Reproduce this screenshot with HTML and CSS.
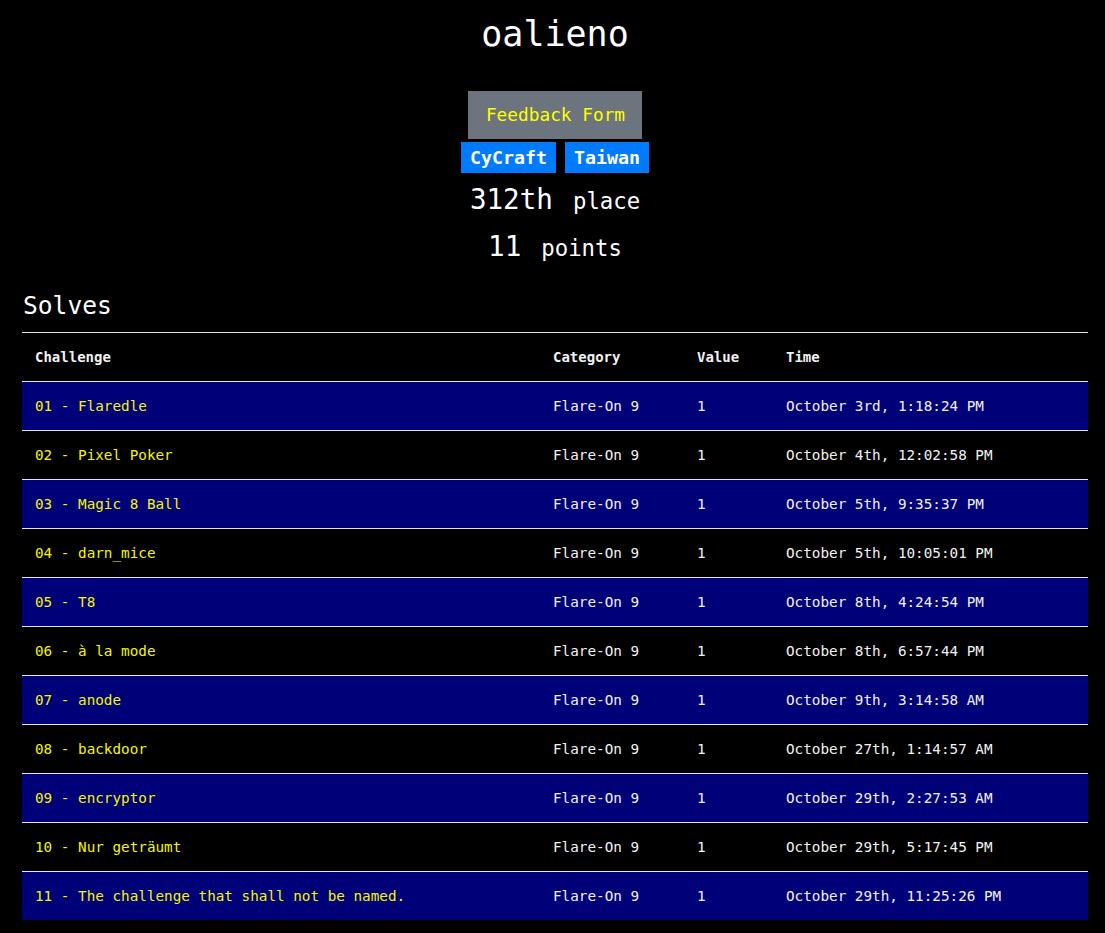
FILE: index.html
```html
<!DOCTYPE html>
<html>
<head>
<meta charset="utf-8">
<link rel="stylesheet" href="styles.css">
</head>
<body>
<div class="page">
  <header class="profile">
    <h1 class="name">oalieno</h1>
    <a class="feedback">Feedback Form</a>
    <div class="badges">
      <span class="badge">CyCraft</span>
      <span class="badge">Taiwan</span>
    </div>
    <div class="stat"><span class="big">312th</span><span class="small">place</span></div>
    <div class="stat stat-points"><span class="big">11</span><span class="small">points</span></div>
  </header>
  <h2 class="section-title">Solves</h2>
  <table class="solves">
    <colgroup>
      <col class="c1"><col class="c2"><col class="c3"><col class="c4">
    </colgroup>
    <thead>
      <tr><th>Challenge</th><th>Category</th><th>Value</th><th>Time</th></tr>
    </thead>
    <tbody>
      <tr><td class="chal">01 - Flaredle</td><td>Flare-On 9</td><td>1</td><td>October 3rd, 1:18:24 PM</td></tr>
      <tr><td class="chal">02 - Pixel Poker</td><td>Flare-On 9</td><td>1</td><td>October 4th, 12:02:58 PM</td></tr>
      <tr><td class="chal">03 - Magic 8 Ball</td><td>Flare-On 9</td><td>1</td><td>October 5th, 9:35:37 PM</td></tr>
      <tr><td class="chal">04 - darn_mice</td><td>Flare-On 9</td><td>1</td><td>October 5th, 10:05:01 PM</td></tr>
      <tr><td class="chal">05 - T8</td><td>Flare-On 9</td><td>1</td><td>October 8th, 4:24:54 PM</td></tr>
      <tr><td class="chal">06 - à la mode</td><td>Flare-On 9</td><td>1</td><td>October 8th, 6:57:44 PM</td></tr>
      <tr><td class="chal">07 - anode</td><td>Flare-On 9</td><td>1</td><td>October 9th, 3:14:58 AM</td></tr>
      <tr><td class="chal">08 - backdoor</td><td>Flare-On 9</td><td>1</td><td>October 27th, 1:14:57 AM</td></tr>
      <tr><td class="chal">09 - encryptor</td><td>Flare-On 9</td><td>1</td><td>October 29th, 2:27:53 AM</td></tr>
      <tr><td class="chal">10 - Nur geträumt</td><td>Flare-On 9</td><td>1</td><td>October 29th, 5:17:45 PM</td></tr>
      <tr><td class="chal">11 - The challenge that shall not be named.</td><td>Flare-On 9</td><td>1</td><td>October 29th, 11:25:26 PM</td></tr>
    </tbody>
  </table>
</div>
</body>
</html>
```
FILE: styles.css
```css
html, body {
  margin: 0;
  padding: 0;
  background: #000;
  color: #fff;
  font-family: "DejaVu Sans Mono", "Liberation Mono", monospace;
}
.page {
  padding: 0 17px 0 22px;
}
.profile {
  display: flex;
  flex-direction: column;
  align-items: center;
}
.name {
  margin: 12px 0 0;
  font-size: 35px;
  font-weight: normal;
  line-height: 44px;
}
.feedback {
  margin-top: 35px;
  display: inline-block;
  background: #6c757d;
  color: #ffff00;
  font-size: 17.8px;
  line-height: 48px;
  padding: 0 17px 0 18px;
}
.badges {
  margin-top: 3px;
  display: flex;
  gap: 9px;
}
.badge {
  background: #007bff;
  color: #fff;
  font-weight: bold;
  font-size: 18.3px;
  line-height: 31px;
  padding: 0 9px;
}
.stat {
  margin-top: 3px;
  line-height: 48px;
  height: 48px;
  display: flex;
  align-items: baseline;
  gap: 20px;
}
.stat-points {
  margin-top: -1px;
}
.big {
  font-size: 27.6px;
}
.small {
  font-size: 22.3px;
}
.section-title {
  margin: 17px 0 8px 1px;
  font-size: 24.6px;
  font-weight: normal;
  line-height: 36px;
}
.solves {
  width: 1066px;
  border-collapse: collapse;
  table-layout: fixed;
  font-size: 14.3px;
}
.c1 { width: 518px; }
.c2 { width: 144px; }
.c3 { width: 89px; }
.c4 { width: 315px; }
.solves th,
.solves td {
  border-top: 1px solid #e4e4e4;
  padding: 12px 12px 12px 13px;
  line-height: 24px;
  text-align: left;
  white-space: nowrap;
  color: #f2f2f2;
}
.solves th {
  font-size: 14px;
  font-weight: bold;
}
.solves tbody tr:nth-child(odd) {
  background: #000078;
}
.solves td.chal {
  color: #f5f500;
}
```
